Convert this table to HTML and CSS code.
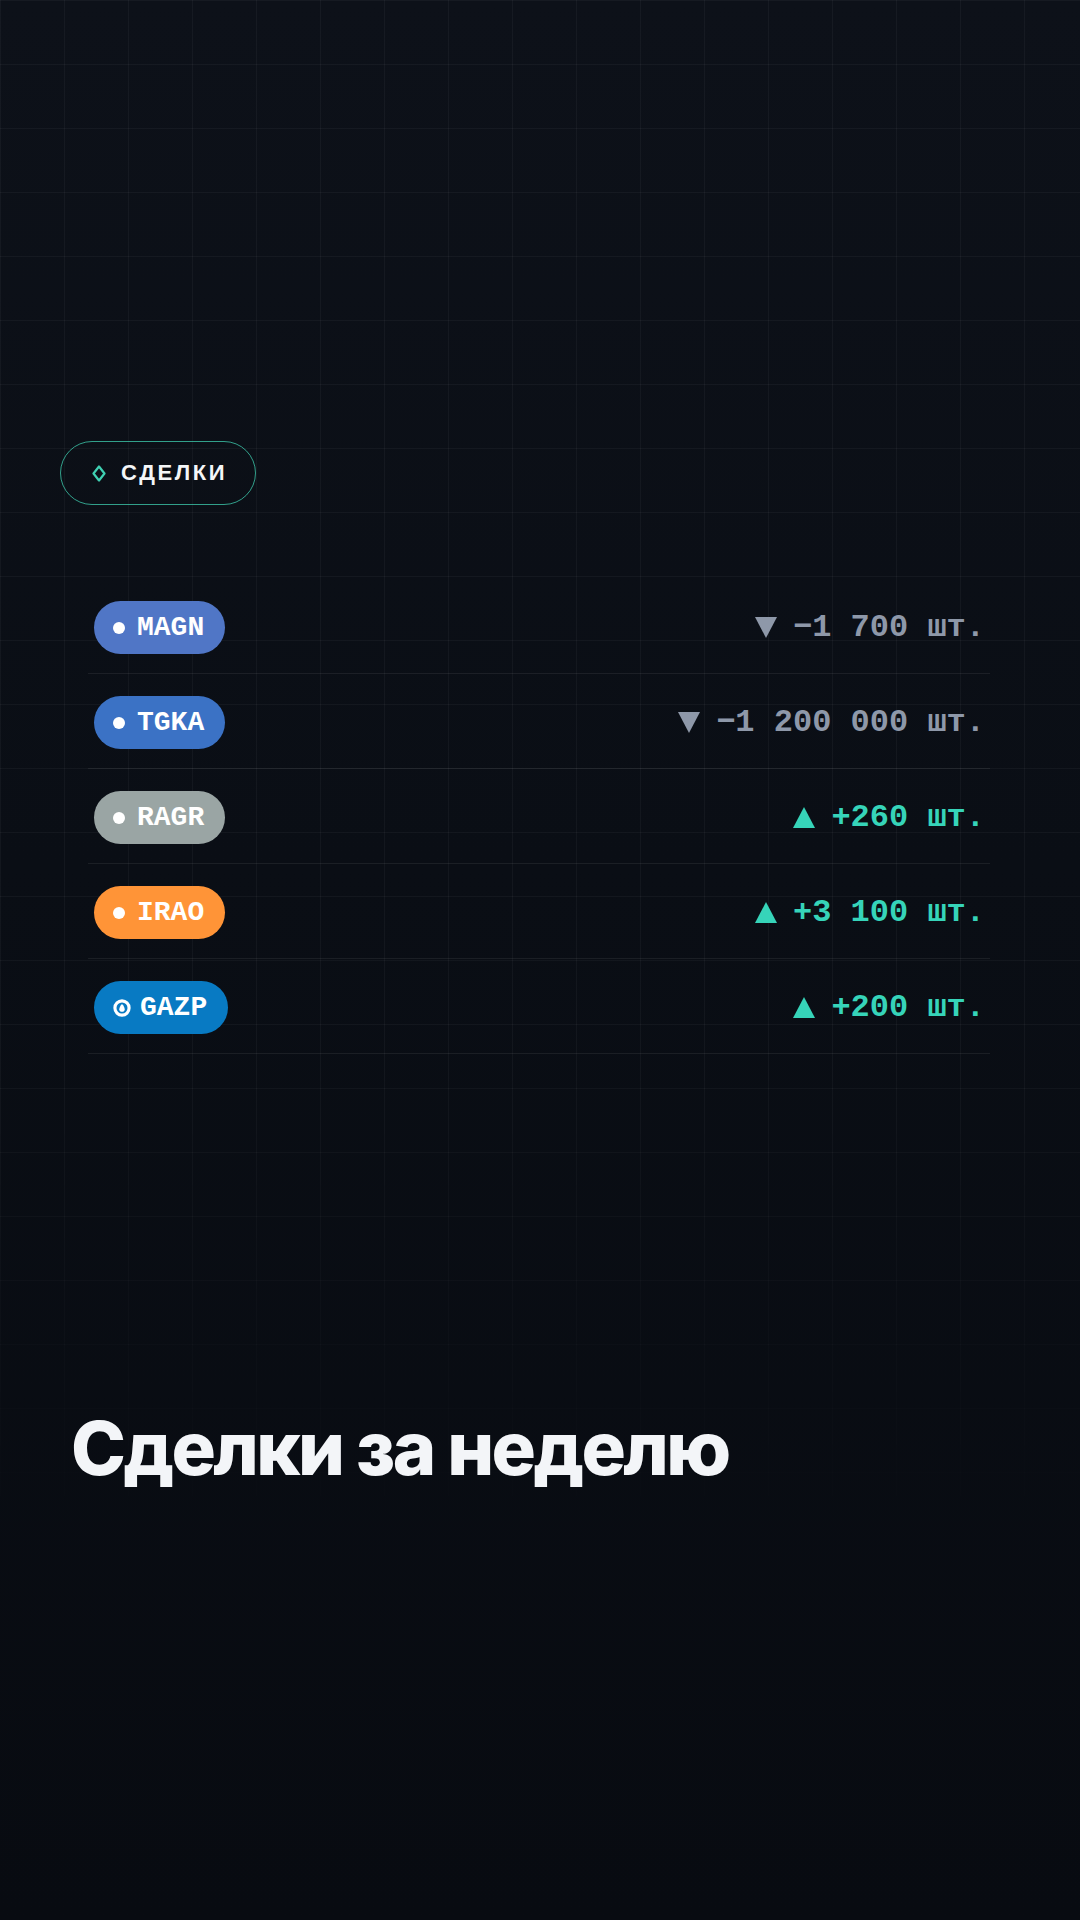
FILE: index.html
```html
<!DOCTYPE html>
<html lang="ru">
<head>
    <meta charset="UTF-8">
    <meta name="viewport" content="width=device-width, initial-scale=1.0">
    <title>Сделки за неделю</title>
    <link rel="stylesheet" href="styles.css">
</head>
<body>
    <main class="page">
        <div class="tag">
            <svg class="tag-icon" width="14" height="17" viewBox="0 0 14 17">
                <path d="M7 1.5 L12.5 8.5 L7 15.5 L1.5 8.5 Z" fill="none" stroke="#3fd0b2" stroke-width="2.2" stroke-linejoin="round"/>
            </svg>
            <span class="tag-text">СДЕЛКИ</span>
        </div>

        <ul class="deals">
            <li class="deal">
                <span class="ticker magn"><span class="dot"></span>MAGN</span>
                <span class="qty down">
                    <svg width="22" height="21" viewBox="0 0 22 21"><path d="M0 0 H22 L11 21 Z" fill="currentColor"/></svg>
                    −1 700 шт.
                </span>
            </li>
            <li class="deal">
                <span class="ticker tgka"><span class="dot"></span>TGKA</span>
                <span class="qty down">
                    <svg width="22" height="21" viewBox="0 0 22 21"><path d="M0 0 H22 L11 21 Z" fill="currentColor"/></svg>
                    −1 200 000 шт.
                </span>
            </li>
            <li class="deal">
                <span class="ticker ragr"><span class="dot"></span>RAGR</span>
                <span class="qty up">
                    <svg width="22" height="21" viewBox="0 0 22 21"><path d="M11 0 L22 21 H0 Z" fill="currentColor"/></svg>
                    +260 шт.
                </span>
            </li>
            <li class="deal">
                <span class="ticker irao"><span class="dot"></span>IRAO</span>
                <span class="qty up">
                    <svg width="22" height="21" viewBox="0 0 22 21"><path d="M11 0 L22 21 H0 Z" fill="currentColor"/></svg>
                    +3 100 шт.
                </span>
            </li>
            <li class="deal">
                <span class="ticker gazp">
                    <svg class="gas" width="18" height="18" viewBox="0 0 16 16">
                        <circle cx="8" cy="8" r="6.3" fill="none" stroke="#fff" stroke-width="2.8"/>
                        <path d="M8 4.4 C9.5 6.1 10.4 7.4 10.4 9 C10.4 10.5 9.3 11.4 8 11.4 C6.7 11.4 5.6 10.5 5.6 9 C5.6 7.4 6.5 6.1 8 4.4 Z" fill="#fff"/>
                    </svg>GAZP</span>
                <span class="qty up">
                    <svg width="22" height="21" viewBox="0 0 22 21"><path d="M11 0 L22 21 H0 Z" fill="currentColor"/></svg>
                    +200 шт.
                </span>
            </li>
        </ul>

        <h1 class="title">Сделки за неделю</h1>
    </main>
</body>
</html>
```

FILE: styles.css
```css
* {
    margin: 0;
    padding: 0;
    box-sizing: border-box;
}

html, body {
    height: 100%;
}

body {
    background: linear-gradient(180deg, #0d1119 0%, #0a0e15 45%, #080b11 100%);
    color: #fff;
    font-family: 'Inter', 'Noto Sans', sans-serif;
    min-height: 1920px;
    position: relative;
    overflow: hidden;
}

/* faint grid, fading out near the bottom */
body::before {
    content: '';
    position: absolute;
    inset: 0;
    background-image:
        linear-gradient(rgba(255, 255, 255, 0.04) 1px, transparent 1px),
        linear-gradient(90deg, rgba(255, 255, 255, 0.04) 1px, transparent 1px);
    background-size: 64px 64px;
    background-position: 0 0;
    -webkit-mask-image: linear-gradient(180deg, #000 0%, #000 55%, transparent 82%);
    mask-image: linear-gradient(180deg, #000 0%, #000 55%, transparent 82%);
    pointer-events: none;
}

.page {
    position: relative;
    padding: 441px 60px 0;
}

.tag {
    display: inline-flex;
    align-items: center;
    gap: 15px;
    height: 64px;
    padding: 0 28px 0 31px;
    border: 1.5px solid rgba(63, 208, 178, 0.75);
    border-radius: 32px;
}

.tag-text {
    font-family: 'Liberation Sans', 'Inter', sans-serif;
    font-weight: 700;
    font-size: 22px;
    letter-spacing: 2.6px;
    color: #f4f6f8;
}

.deals {
    list-style: none;
    margin: 74px 30px 0 28px;
}

.deal {
    display: flex;
    justify-content: space-between;
    align-items: center;
    padding: 22px 5px 19px 6px;
    border-bottom: 1px solid rgba(255, 255, 255, 0.07);
}

.ticker {
    display: inline-flex;
    align-items: center;
    gap: 12px;
    height: 53px;
    padding: 0 21px 0 19px;
    border-radius: 27px;
    font-family: 'Liberation Mono', monospace;
    font-weight: 700;
    font-size: 28px;
    color: #fff;
}

.dot {
    width: 12px;
    height: 12px;
    border-radius: 50%;
    background: #fff;
}

.gas {
    margin-right: -3px;
}

.magn { background: #5076c6; }
.tgka { background: #3b72c5; }
.ragr { background: #9aa5a4; }
.irao { background: #ff9437; }
.gazp { background: #087ac3; }

.qty {
    display: inline-flex;
    align-items: center;
    gap: 16px;
    font-family: 'Liberation Mono', monospace;
    font-size: 32px;
    font-weight: 700;
}

.down { color: #8e98a9; }
.up { color: #36d4b9; }

.title {
    margin: 354px 0 0 11px;
    font-family: 'Inter', sans-serif;
    font-weight: 800;
    font-size: 74px;
    line-height: 1.1;
    letter-spacing: -2.6px;
    color: #f3f5f8;
}
```
